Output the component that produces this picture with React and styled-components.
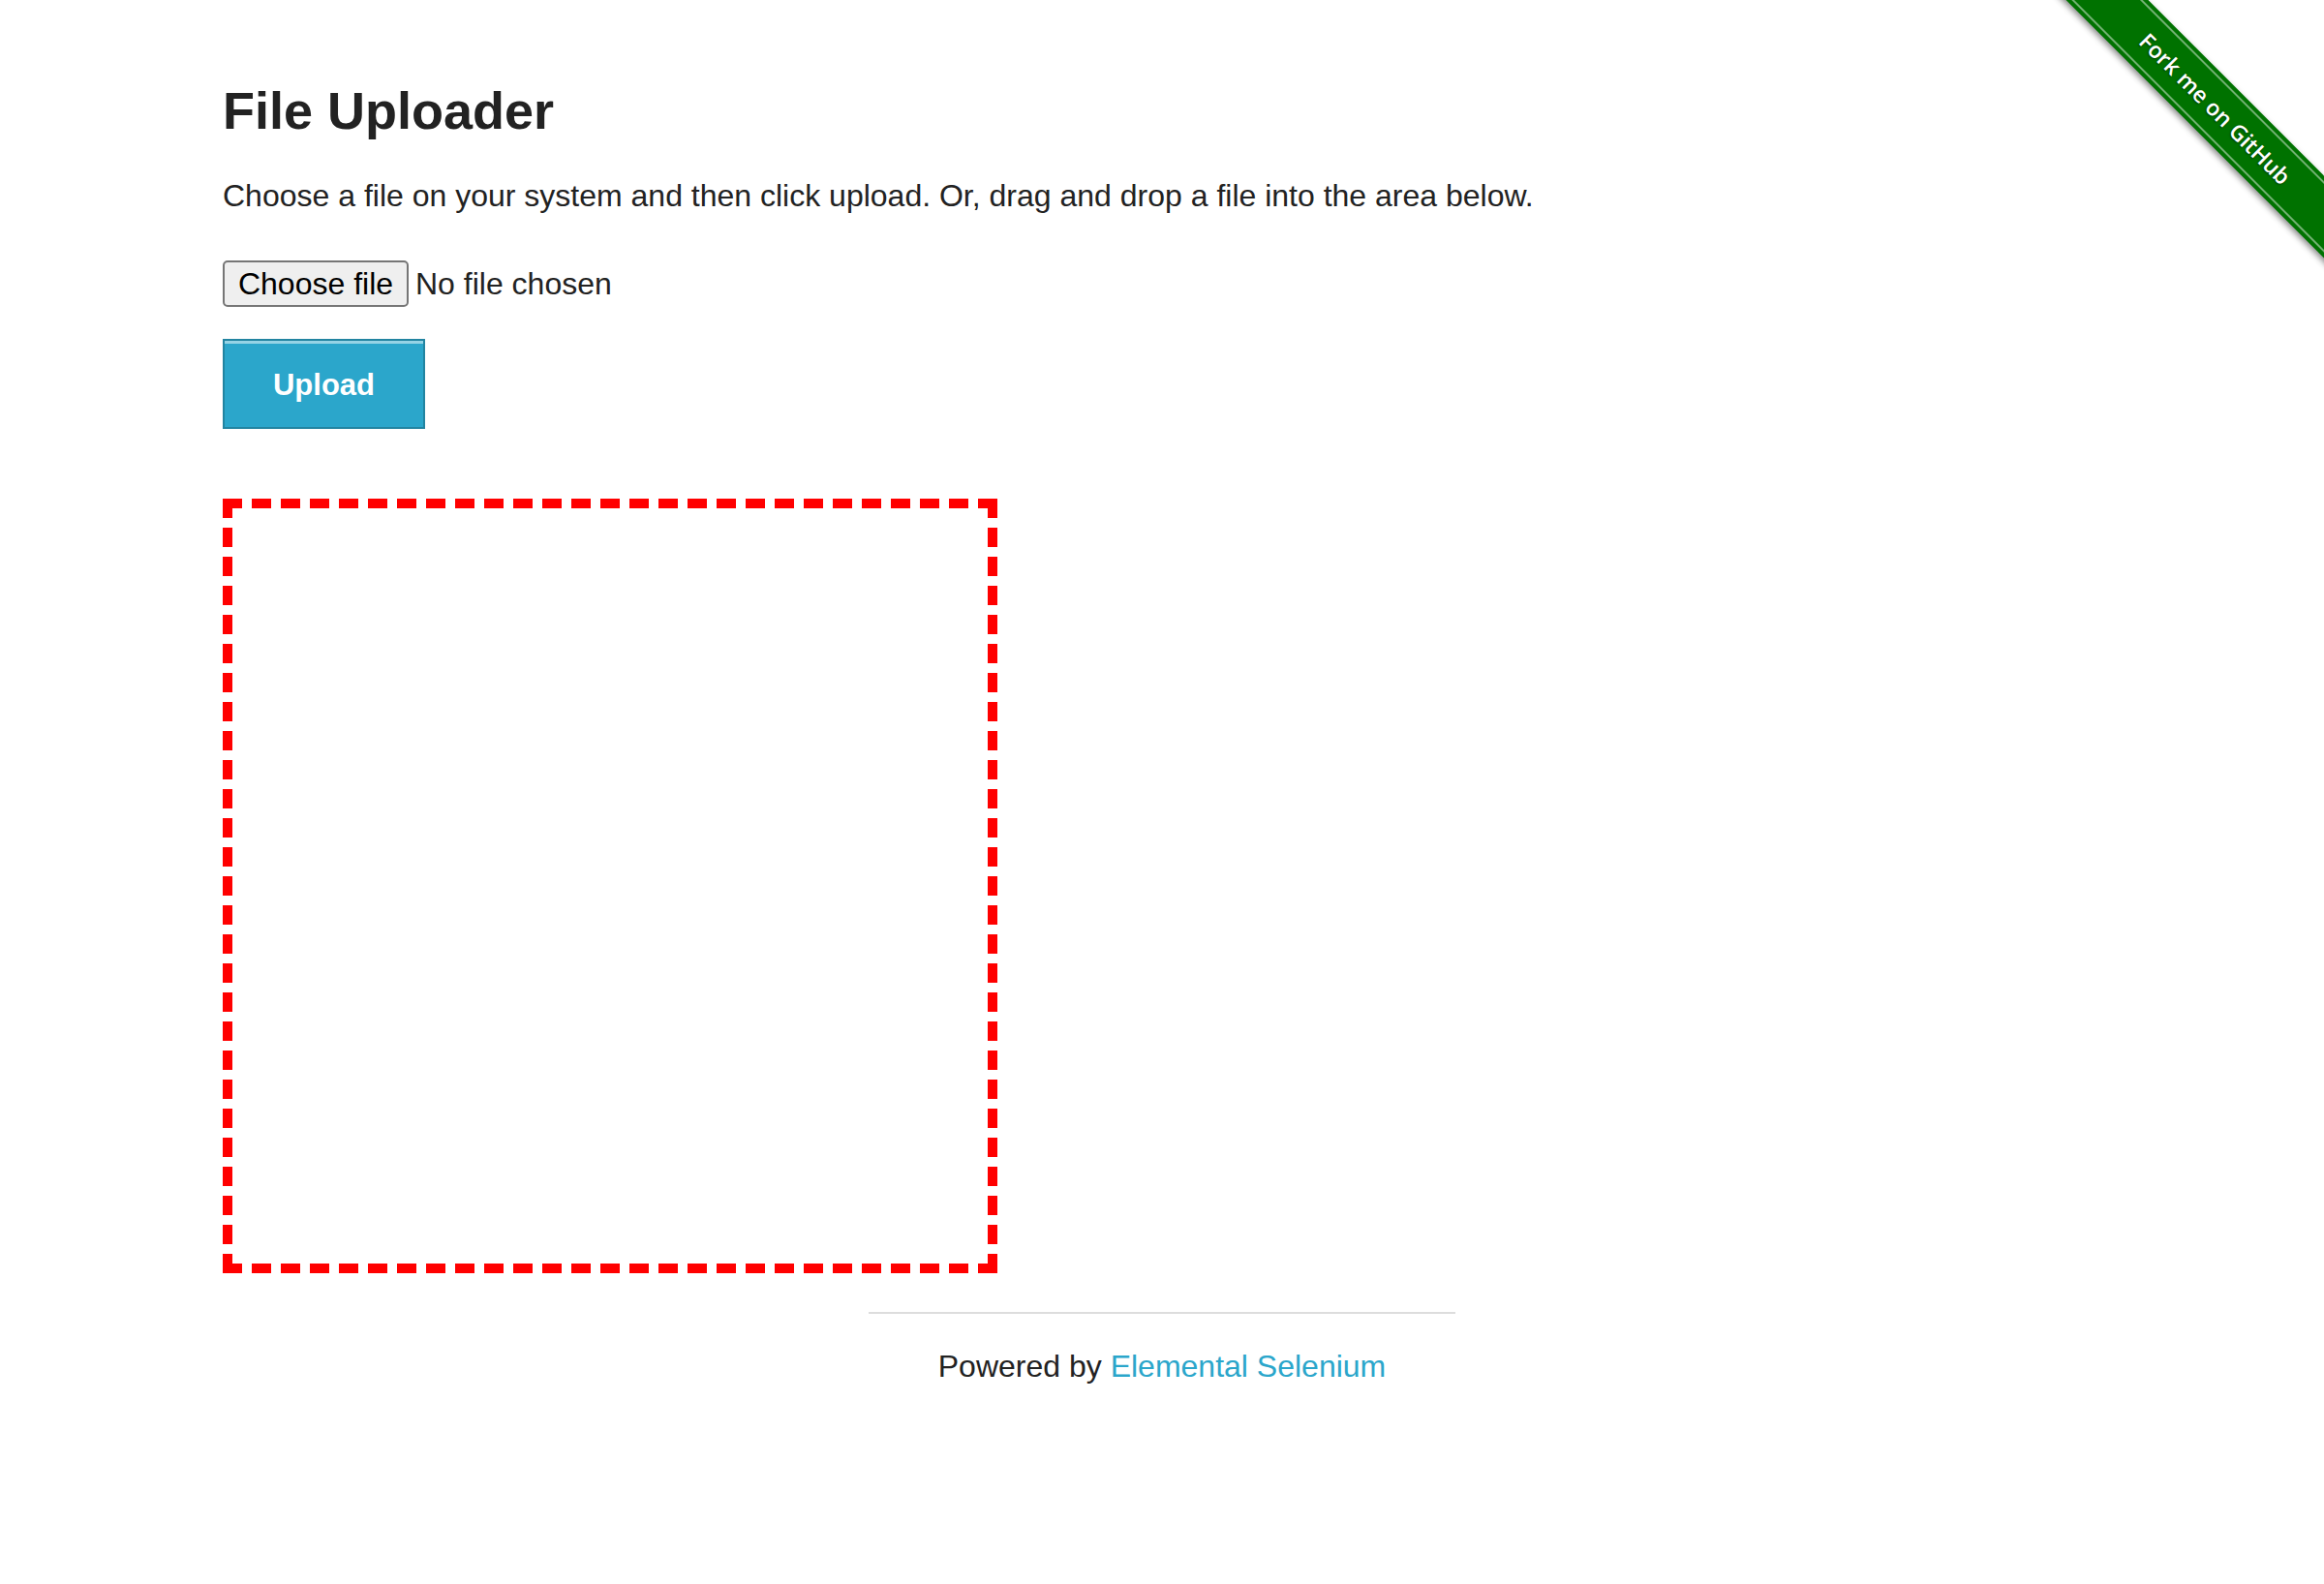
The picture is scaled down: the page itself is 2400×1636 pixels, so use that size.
import React from "react";
import styled, { createGlobalStyle } from "styled-components";

const GlobalStyle = createGlobalStyle`
  html, body {
    margin: 0;
    padding: 0;
    background: #ffffff;
  }
  body {
    font-family: "Liberation Sans", Arial, Helvetica, sans-serif;
    color: #222222;
  }
  * { box-sizing: border-box; }
`;

const PageWrap = styled.div`
  position: relative;
  min-height: 1636px;
  overflow: hidden;
`;

const Row = styled.div`
  max-width: 2000px;
  margin: 0 auto;
`;

const Content = styled.div`
  padding: 82px 30px 0;
  display: flex;
  flex-direction: column;
  align-items: flex-start;
`;

const Title = styled.h3`
  margin: 0;
  font-size: 54px;
  line-height: 64px;
  font-weight: 700;
  color: #222222;
`;

const Lead = styled.p`
  margin: 32px 0 0;
  font-size: 32px;
  line-height: 48px;
  color: #222222;
`;

const FileLabel = styled.label`
  margin-top: 43px;
  display: flex;
  align-items: center;
  height: 48px;
  font-size: 32px;
  cursor: pointer;
`;

const HiddenInput = styled.input`
  display: none;
`;

const FileButton = styled.span`
  display: inline-flex;
  align-items: center;
  justify-content: center;
  width: 192px;
  height: 48px;
  border: 2px solid #767676;
  border-radius: 5px;
  background: #efefef;
  color: #000000;
  font-size: 32px;
  line-height: 37px;
`;

const FileName = styled.span`
  margin-left: 7px;
  color: #222222;
  font-size: 32px;
  line-height: 37px;
`;

const UploadButton = styled.button`
  margin-top: 33px;
  width: 209px;
  height: 93px;
  padding: 0;
  border: 2px solid #2284a1;
  background: #2ba6cb;
  box-shadow: inset 0 3px 0 rgba(255, 255, 255, 0.5);
  color: #ffffff;
  font-family: "Liberation Sans", Arial, sans-serif;
  font-weight: 700;
  font-size: 31px;
  line-height: 35px;
  padding-top: 2px;
  cursor: pointer;
`;

const DropZone = styled.div`
  margin-top: 72px;
  width: 800px;
  height: 800px;
  border: 10px dashed #ff0000;
`;

const Footer = styled.div`
  width: 33.3333%;
  margin: 40px auto 0;
  padding: 0 30px;
`;

const Rule = styled.hr`
  margin: 0;
  border: 0;
  height: 2px;
  background: #dddddd;
`;

const FooterText = styled.div`
  margin-top: 30px;
  text-align: center;
  font-size: 32px;
  line-height: 48px;
  color: #222222;
`;

const FooterLink = styled.a`
  color: #2ba6cb;
  text-decoration: none;
`;

const RibbonWrap = styled.div`
  position: absolute;
  top: 0;
  right: 0;
  width: 300px;
  height: 300px;
  overflow: hidden;
  pointer-events: none;
`;

const RibbonBand = styled.a`
  position: absolute;
  left: -32px;
  top: 82px;
  width: 440px;
  height: 60px;
  transform: rotate(45deg);
  background: #007200;
  box-shadow: 0 3px 6px rgba(0, 0, 0, 0.45);
  display: flex;
  align-items: center;
  justify-content: center;
  color: #ffffff;
  font-family: "Open Sans", "DejaVu Sans", sans-serif;
  font-weight: 600;
  font-size: 23px;
  text-decoration: none;
  text-shadow: 0 1px 2px rgba(0, 0, 0, 0.5);
  pointer-events: auto;

  &::before,
  &::after {
    content: "";
    position: absolute;
    left: 0;
    right: 0;
    height: 2px;
    background: rgba(255, 255, 255, 0.45);
  }
  &::before { top: 4px; }
  &::after { bottom: 4px; }
`;

export default function App() {
  return (
    <PageWrap>
      <GlobalStyle />
      <Row>
        <Content>
          <Title>File Uploader</Title>
          <Lead>
            Choose a file on your system and then click upload. Or, drag and
            drop a file into the area below.
          </Lead>
          <FileLabel>
            <HiddenInput type="file" />
            <FileButton>Choose file</FileButton>
            <FileName>No file chosen</FileName>
          </FileLabel>
          <UploadButton type="button">Upload</UploadButton>
          <DropZone />
        </Content>
        <Footer>
          <Rule />
          <FooterText>
            Powered by <FooterLink href="#">Elemental Selenium</FooterLink>
          </FooterText>
        </Footer>
      </Row>
      <RibbonWrap>
        <RibbonBand href="#">Fork me on GitHub</RibbonBand>
      </RibbonWrap>
    </PageWrap>
  );
}
